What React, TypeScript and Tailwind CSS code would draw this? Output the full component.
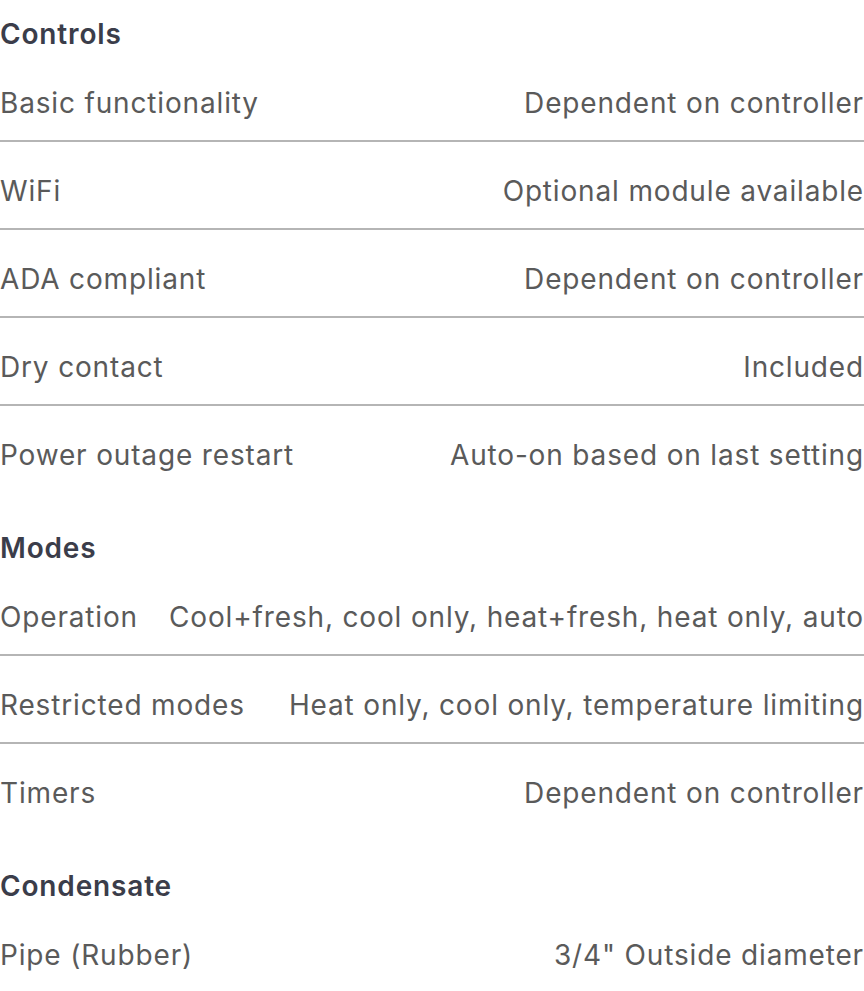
import type React from 'react';

type Row = { label: string; value: string };
type Section = { title: string; rows: Row[] };

const sections: Section[] = [
  {
    title: 'Controls',
    rows: [
      { label: 'Basic functionality', value: 'Dependent on controller' },
      { label: 'WiFi', value: 'Optional module available' },
      { label: 'ADA compliant', value: 'Dependent on controller' },
      { label: 'Dry contact', value: 'Included' },
      { label: 'Power outage restart', value: 'Auto-on based on last setting' },
    ],
  },
  {
    title: 'Modes',
    rows: [
      { label: 'Operation', value: 'Cool+fresh, cool only, heat+fresh, heat only, auto' },
      { label: 'Restricted modes', value: 'Heat only, cool only, temperature limiting' },
      { label: 'Timers', value: 'Dependent on controller' },
    ],
  },
  {
    title: 'Condensate',
    rows: [{ label: 'Pipe (Rubber)', value: '3/4" Outside diameter' }],
  },
];

const App: React.FC = () => {
  return (
    <div className="w-[864px] min-h-[991px] bg-white pt-[14px] flex flex-col gap-[34px] font-['Inter',sans-serif] text-[28px] leading-[40px] tracking-[0.03em]">
      {sections.map((section) => (
        <section key={section.title}>
          {/* Section heading */}
          <h2 className="font-semibold text-[#3b3d4a]">{section.title}</h2>
          {section.rows.map((row) => (
            <div
              key={row.label}
              className="flex justify-between gap-6 pt-[29px] pb-[17px] border-b-2 border-[#b5b5b5] last:border-transparent text-[#5a5a5a]"
            >
              <span className="whitespace-nowrap">{row.label}</span>
              <span className="whitespace-nowrap text-right">{row.value}</span>
            </div>
          ))}
        </section>
      ))}
    </div>
  );
};

export default App;
